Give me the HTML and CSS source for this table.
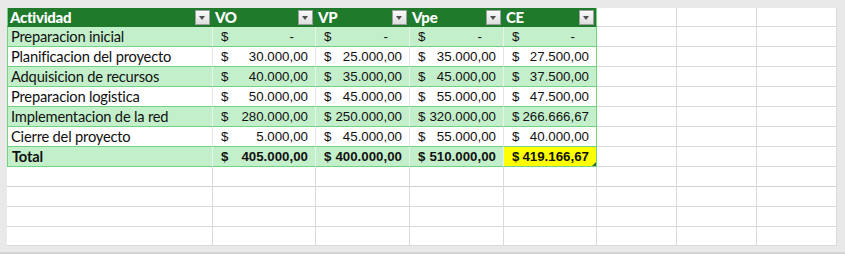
FILE: index.html
```html
<!DOCTYPE html>
<html lang="es">
<head>
<meta charset="utf-8">
<title>Actividades</title>
<link rel="stylesheet" href="styles.css">
</head>
<body>
<div class="frame">
  <div class="sheet">
    <div class="row head">
      <div class="c t txt">Actividad<span class="flt"></span></div>
      <div class="c t txt">VO<span class="flt"></span></div>
      <div class="c t txt">VP<span class="flt"></span></div>
      <div class="c t txt">Vpe<span class="flt"></span></div>
      <div class="c t txt last">CE<span class="flt"></span></div>
      <div class="c g"></div><div class="c g"></div><div class="c g"></div>
    </div>
    <div class="row band">
      <div class="c t txt">Preparacion inicial</div>
      <div class="c t num"><span>$</span><span class="dash">-</span></div>
      <div class="c t num"><span>$</span><span class="dash">-</span></div>
      <div class="c t num"><span>$</span><span class="dash">-</span></div>
      <div class="c t num last"><span>$</span><span class="dash">-</span></div>
      <div class="c g"></div><div class="c g"></div><div class="c g"></div>
    </div>
    <div class="row">
      <div class="c t txt">Planificacion del proyecto</div>
      <div class="c t num"><span>$</span><span>30.000,00</span></div>
      <div class="c t num"><span>$</span><span>25.000,00</span></div>
      <div class="c t num"><span>$</span><span>35.000,00</span></div>
      <div class="c t num last"><span>$</span><span>27.500,00</span></div>
      <div class="c g"></div><div class="c g"></div><div class="c g"></div>
    </div>
    <div class="row band">
      <div class="c t txt">Adquisicion de recursos</div>
      <div class="c t num"><span>$</span><span>40.000,00</span></div>
      <div class="c t num"><span>$</span><span>35.000,00</span></div>
      <div class="c t num"><span>$</span><span>45.000,00</span></div>
      <div class="c t num last"><span>$</span><span>37.500,00</span></div>
      <div class="c g"></div><div class="c g"></div><div class="c g"></div>
    </div>
    <div class="row">
      <div class="c t txt">Preparacion logistica</div>
      <div class="c t num"><span>$</span><span>50.000,00</span></div>
      <div class="c t num"><span>$</span><span>45.000,00</span></div>
      <div class="c t num"><span>$</span><span>55.000,00</span></div>
      <div class="c t num last"><span>$</span><span>47.500,00</span></div>
      <div class="c g"></div><div class="c g"></div><div class="c g"></div>
    </div>
    <div class="row band">
      <div class="c t txt">Implementacion de la red</div>
      <div class="c t num"><span>$</span><span>280.000,00</span></div>
      <div class="c t num"><span>$</span><span>250.000,00</span></div>
      <div class="c t num"><span>$</span><span>320.000,00</span></div>
      <div class="c t num last"><span>$</span><span>266.666,67</span></div>
      <div class="c g"></div><div class="c g"></div><div class="c g"></div>
    </div>
    <div class="row">
      <div class="c t txt">Cierre del proyecto</div>
      <div class="c t num"><span>$</span><span>5.000,00</span></div>
      <div class="c t num"><span>$</span><span>45.000,00</span></div>
      <div class="c t num"><span>$</span><span>55.000,00</span></div>
      <div class="c t num last"><span>$</span><span>40.000,00</span></div>
      <div class="c g"></div><div class="c g"></div><div class="c g"></div>
    </div>
    <div class="row band total">
      <div class="c t txt">Total</div>
      <div class="c t num"><span>$</span><span>405.000,00</span></div>
      <div class="c t num"><span>$</span><span>400.000,00</span></div>
      <div class="c t num"><span>$</span><span>510.000,00</span></div>
      <div class="c t num last hl"><span>$</span><span>419.166,67</span><span class="handle"></span></div>
      <div class="c g"></div><div class="c g"></div><div class="c g"></div>
    </div>
    <div class="row empty first">
      <div class="c g"></div><div class="c g"></div><div class="c g"></div><div class="c g"></div>
      <div class="c g"></div><div class="c g"></div><div class="c g"></div><div class="c g"></div>
    </div>
    <div class="row empty">
      <div class="c g"></div><div class="c g"></div><div class="c g"></div><div class="c g"></div>
      <div class="c g"></div><div class="c g"></div><div class="c g"></div><div class="c g"></div>
    </div>
    <div class="row empty">
      <div class="c g"></div><div class="c g"></div><div class="c g"></div><div class="c g"></div>
      <div class="c g"></div><div class="c g"></div><div class="c g"></div><div class="c g"></div>
    </div>
    <div class="row empty lastrow">
      <div class="c g"></div><div class="c g"></div><div class="c g"></div><div class="c g"></div>
      <div class="c g"></div><div class="c g"></div><div class="c g"></div><div class="c g"></div>
    </div>
  </div>
</div>
</body>
</html>
```

FILE: styles.css
```css
* { box-sizing: border-box; }
html, body { margin: 0; padding: 0; }
body { width: 845px; height: 254px; overflow: hidden; background: #ececec; }

.frame {
  width: 845px;
  height: 254px;
  padding: 8px 8px 7px 7px;
  background: #e9e9e9;
  border-bottom: 2px solid #d3d3d3;
}

.sheet {
  width: 830px;
  background: #ffffff;
  border-right: 1px solid #d0d0d0;
}

.row {
  display: grid;
  grid-template-columns: 206px 103px 94px 94px 93px 80px 80px 80px;
  height: 20px;
}
.row.head { height: 19px; }
.row.lastrow { height: 19px; }

.c {
  border-right: 1px solid #dadada;
  border-bottom: 1px solid #dadada;
  min-width: 0;
  overflow: hidden;
  white-space: nowrap;
}
.empty.first .c { border-bottom-color: #d2d2d2; }

.c.t {
  border-bottom: 1px solid #72d27f;
  border-right: 1px solid #e1e6e1;
  color: #111;
}
.row .c.t:first-child { border-left: 1px solid #72d27f; }
.c.t.last { border-right: 1px solid #72d27f; }

.band .c.t { background: #c4efcb; border-right-color: #e7f5e9; }
.band .c.t.last { border-right-color: #72d27f; }

.txt {
  font-family: Lato, "Liberation Sans", sans-serif;
  font-size: 14.7px;
  letter-spacing: -0.2px;
  line-height: 19px;
  padding-left: 3px;
}

.num {
  font-family: "Liberation Sans", Arial, sans-serif;
  font-size: 13.3px;
  line-height: 19px;
  display: flex;
  justify-content: space-between;
  padding: 0 7px 0 8px;
  position: relative;
}
.dash { padding-right: 14px; }

.head .c.t {
  background: #1f7a2c;
  border-right-color: #1f7a2c;
  border-bottom-color: #1f7a2c;
  color: #ffffff;
  font-size: 15px;
  font-weight: 900;
  letter-spacing: -0.3px;
  display: flex;
  justify-content: space-between;
  align-items: center;
  padding-right: 2px;
  padding-left: 2px;
}
.head .c.t.last { border-right-color: #72d27f; }
.head .c.t:first-child { border-left-color: #72d27f; padding-left: 2px; }

.flt {
  width: 15px;
  height: 15px;
  border: 1px solid #9e9e9e;
  background: linear-gradient(#fafafa, #dedede);
  position: relative;
  flex: none;
}
.flt::after {
  content: "";
  position: absolute;
  left: 3px;
  top: 5px;
  border-left: 3.5px solid transparent;
  border-right: 3.5px solid transparent;
  border-top: 4px solid #505050;
}

.total .c.t { font-weight: bold; }
.total .txt { font-weight: 900; padding-left: 4px; }
.total .c.t.hl { background: #ffff00; }

.handle {
  position: absolute;
  right: 0;
  bottom: 0;
  width: 4px;
  height: 4px;
  background: #2f6a3a;
  clip-path: polygon(100% 0, 100% 100%, 0 100%);
}
```
